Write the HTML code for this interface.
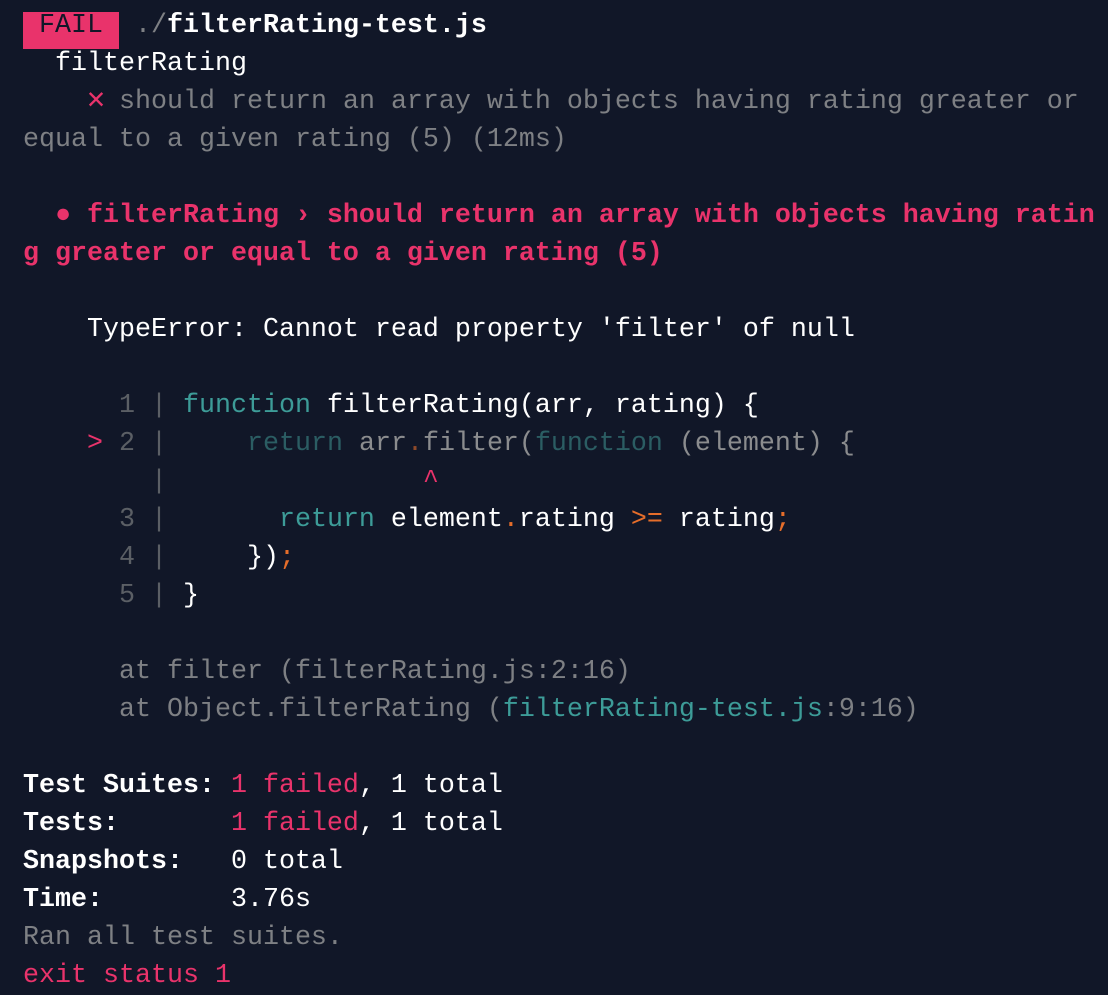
<!DOCTYPE html>
<html><head><meta charset="utf-8"><style>
html,body{margin:0;padding:0;background:#111728;width:1108px;height:994px;overflow:hidden}
pre{margin:0;position:absolute;left:23px;top:7px;font-family:"Liberation Mono","DejaVu Sans Mono",monospace;font-size:26.67px;line-height:38px;color:#fff;white-space:pre}
.g{color:#7e8084}.r{color:#e9336b}.t{color:#3d9c98}.dt{color:#2b5d63}.o{color:#e56d2a}.do{color:#8e4a2a}.n{color:#5b5f65}.dg{color:#8b8c8e}
.b{font-weight:bold}
.badge{display:inline-block;height:38px;line-height:38px;vertical-align:top;color:#111728;background:linear-gradient(to bottom,transparent 5px,#e9336b 5px);box-shadow:0 4px 0 #e9336b}
.x{display:inline-block;width:16px;font-size:30px;line-height:30px;text-align:center}
</style></head><body>
<pre><span class="badge"> FAIL </span> <span class="g">./</span><span class="b">filterRating-test.js</span>
  filterRating
    <span class="r x">✕</span> <span class="g">should return an array with objects having rating greater or</span>
<span class="g">equal to a given rating (5) (12ms)</span>

<span class="r b">  ● filterRating › should return an array with objects having ratin</span>
<span class="r b">g greater or equal to a given rating (5)</span>

    TypeError: Cannot read property 'filter' of null

<span class="n">      1 | </span><span class="t">function</span> filterRating(arr, rating) {
<span class="r">    &gt;</span><span class="n"> 2 | </span>    <span class="dt">return</span> <span class="dg">arr</span><span class="do">.</span><span class="dg">filter(</span><span class="dt">function</span> <span class="dg">(element) {</span>
<span class="n">        | </span>               <span class="r">^</span>
<span class="n">      3 | </span>      <span class="t">return</span> element<span class="o">.</span>rating <span class="o">&gt;=</span> rating<span class="o">;</span>
<span class="n">      4 | </span>    })<span class="o">;</span>
<span class="n">      5 | </span>}

<span class="g">      at filter (filterRating.js:2:16)</span>
<span class="g">      at Object.filterRating (</span><span class="t">filterRating-test.js</span><span class="g">:9:16)</span>

<span class="b">Test Suites: </span><span class="r">1 failed</span>, 1 total
<span class="b">Tests:       </span><span class="r">1 failed</span>, 1 total
<span class="b">Snapshots:   </span>0 total
<span class="b">Time:        </span>3.76s
<span class="g">Ran all test suites.</span>
<span class="r">exit status 1</span></pre>
</body></html>
